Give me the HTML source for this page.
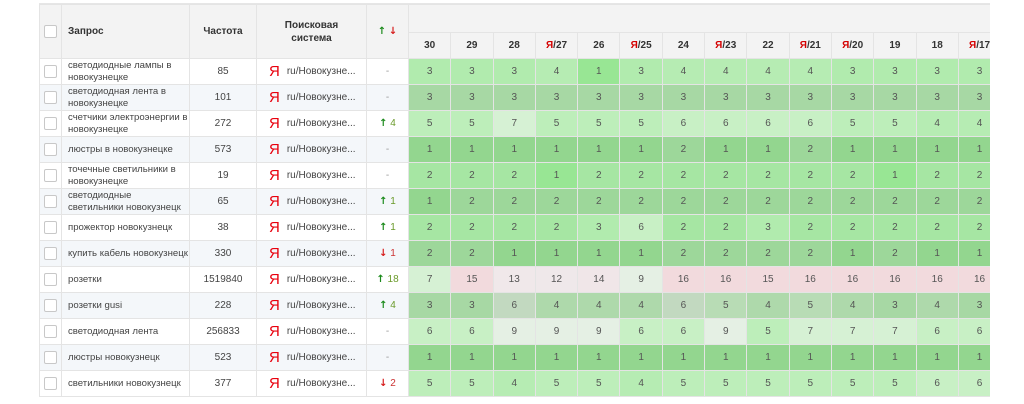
<!DOCTYPE html>
<html><head><meta charset="utf-8"><style>
body{margin:0;background:#fff;width:1024px;height:400px;overflow:hidden;font-family:"Liberation Sans",sans-serif;}
.wrap{position:absolute;left:39px;top:3px;width:951px;height:400px;overflow:hidden;border-top:1px solid #e6e6e6;}
table{border-collapse:collapse;table-layout:fixed;width:961px;font-size:10px;color:#444;}
td,th{border:1px solid #e4e4e4;padding:0;height:25px;text-align:center;overflow:hidden;white-space:nowrap;}
th{background:#f3f3f3;font-weight:bold;color:#333;font-size:10px;}
tr.h1 th{height:27px;}
tr.h2 th{height:25px;}
td.q{text-align:left;padding-left:6px;}
td.q div{white-space:normal;line-height:12px;font-size:9.6px;height:24px;overflow:hidden;display:flex;align-items:center;}
tr.e td.l{background:#f4f7fa;}
.cb{display:inline-block;width:11px;height:11px;border:1px solid #c8c8c8;border-radius:2px;background:#fff;vertical-align:middle;}
.ya{color:#e8000d;font-size:15px;font-family:"Liberation Sans",sans-serif;margin-right:7px;vertical-align:middle;}
td.se{text-align:left;padding-left:12px;}
.up,.dn{font-family:"DejaVu Sans",sans-serif;font-weight:bold;}
.up{color:#1b8a1b;}.dn{color:#d61c1c;}.n{color:#6a9a2a}.nr{color:#c33}
.r{color:#d40000}
td.v{color:#555;font-size:10px;}
</style></head><body><div class="wrap"><table>
<colgroup><col style="width:22px"><col style="width:128px"><col style="width:67px"><col style="width:110px"><col style="width:42px">
<col style="width:42.3px"><col style="width:42.3px"><col style="width:42.3px"><col style="width:42.3px"><col style="width:42.3px"><col style="width:42.3px"><col style="width:42.3px"><col style="width:42.3px"><col style="width:42.3px"><col style="width:42.3px"><col style="width:42.3px"><col style="width:42.3px"><col style="width:42.3px"><col style="width:42.3px"></colgroup>
<tr class="h1"><th rowspan="2"><span class="cb"></span></th><th rowspan="2" style="text-align:left;padding-left:6px">Запрос</th><th rowspan="2">Частота</th><th rowspan="2" style="line-height:13px">Поисковая<br>система</th><th rowspan="2"><span class="up">↑</span> <span class="dn">↓</span></th><th colspan="14"></th></tr>
<tr class="h2"><th>30</th><th>29</th><th>28</th><th><span class="r">Я</span>/27</th><th>26</th><th><span class="r">Я</span>/25</th><th>24</th><th><span class="r">Я</span>/23</th><th>22</th><th><span class="r">Я</span>/21</th><th><span class="r">Я</span>/20</th><th>19</th><th>18</th><th><span class="r">Я</span>/17</th></tr>
<tbody id="b"></tbody></table></div>
<script>
var rows=[
["светодиодные лампы в новокузнецке","85","-",[3,3,3,4,1,3,4,4,4,4,3,3,3,3]],
["светодиодная лента в новокузнецке","101","-",[3,3,3,3,3,3,3,3,3,3,3,3,3,3]],
["счетчики электроэнергии в новокузнецке","272","u4",[5,5,7,5,5,5,6,6,6,6,5,5,4,4]],
["люстры в новокузнецке","573","-",[1,1,1,1,1,1,2,1,1,2,1,1,1,1]],
["точечные светильники в новокузнецке","19","-",[2,2,2,1,2,2,2,2,2,2,2,1,2,2]],
["светодиодные светильники новокузнецк","65","u1",[1,2,2,2,2,2,2,2,2,2,2,2,2,2]],
["прожектор новокузнецк","38","u1",[2,2,2,2,3,6,2,2,3,2,2,2,2,2]],
["купить кабель новокузнецк","330","d1",[2,2,1,1,1,1,2,2,2,2,1,2,1,1]],
["розетки","1519840","u18",[7,15,13,12,14,9,16,16,15,16,16,16,16,16]],
["розетки gusi","228","u4",[3,3,6,4,4,4,6,5,4,5,4,3,4,3]],
["светодиодная лента","256833","-",[6,6,9,9,9,6,6,9,5,7,7,7,6,6]],
["люстры новокузнецк","523","-",[1,1,1,1,1,1,1,1,1,1,1,1,1,1]],
["светильники новокузнецк","377","d2",[5,5,4,5,5,4,5,5,5,5,5,5,6,6]]];
var co={1:"#98e694",2:"#a6e6a3",3:"#b1ebae",4:"#b6ecb3",5:"#bdeeba",6:"#c8f0c5",7:"#d6f1d4",9:"#e5f0e4",12:"#efe8ea",13:"#f0e8ea",14:"#f0e6e8",15:"#f2dadd",16:"#f2dadd"};
var ce={1:"#93d68f",2:"#9dd79a",3:"#a7d8a4",4:"#aed9ab",5:"#b8dcb5",6:"#c2d9c0",7:"#cfe0cd",9:"#dde4dc"};
var h="";
rows.forEach(function(r,i){var e=i%2==1;
var t=r[2]=="-"?'<span style="color:#999">-</span>':(r[2][0]=="u"?'<span class="up">↑</span> <span class="n">'+r[2].slice(1)+'</span>':'<span class="dn">↓</span> <span class="nr">'+r[2].slice(1)+'</span>');
h+='<tr'+(e?' class="e"':'')+'><td class="l"><span class="cb"></span></td><td class="l q"><div>'+r[0]+'</div></td><td class="l">'+r[1]+'</td><td class="l se"><span class="ya">Я</span>ru/Новокузне...</td><td class="l">'+t+'</td>';
r[3].forEach(function(v){var c=(e&&ce[v])?ce[v]:co[v];h+='<td class="v" style="background:'+c+'">'+v+'</td>';});
h+='</tr>';});
document.getElementById("b").innerHTML=h;
</script></body></html>
